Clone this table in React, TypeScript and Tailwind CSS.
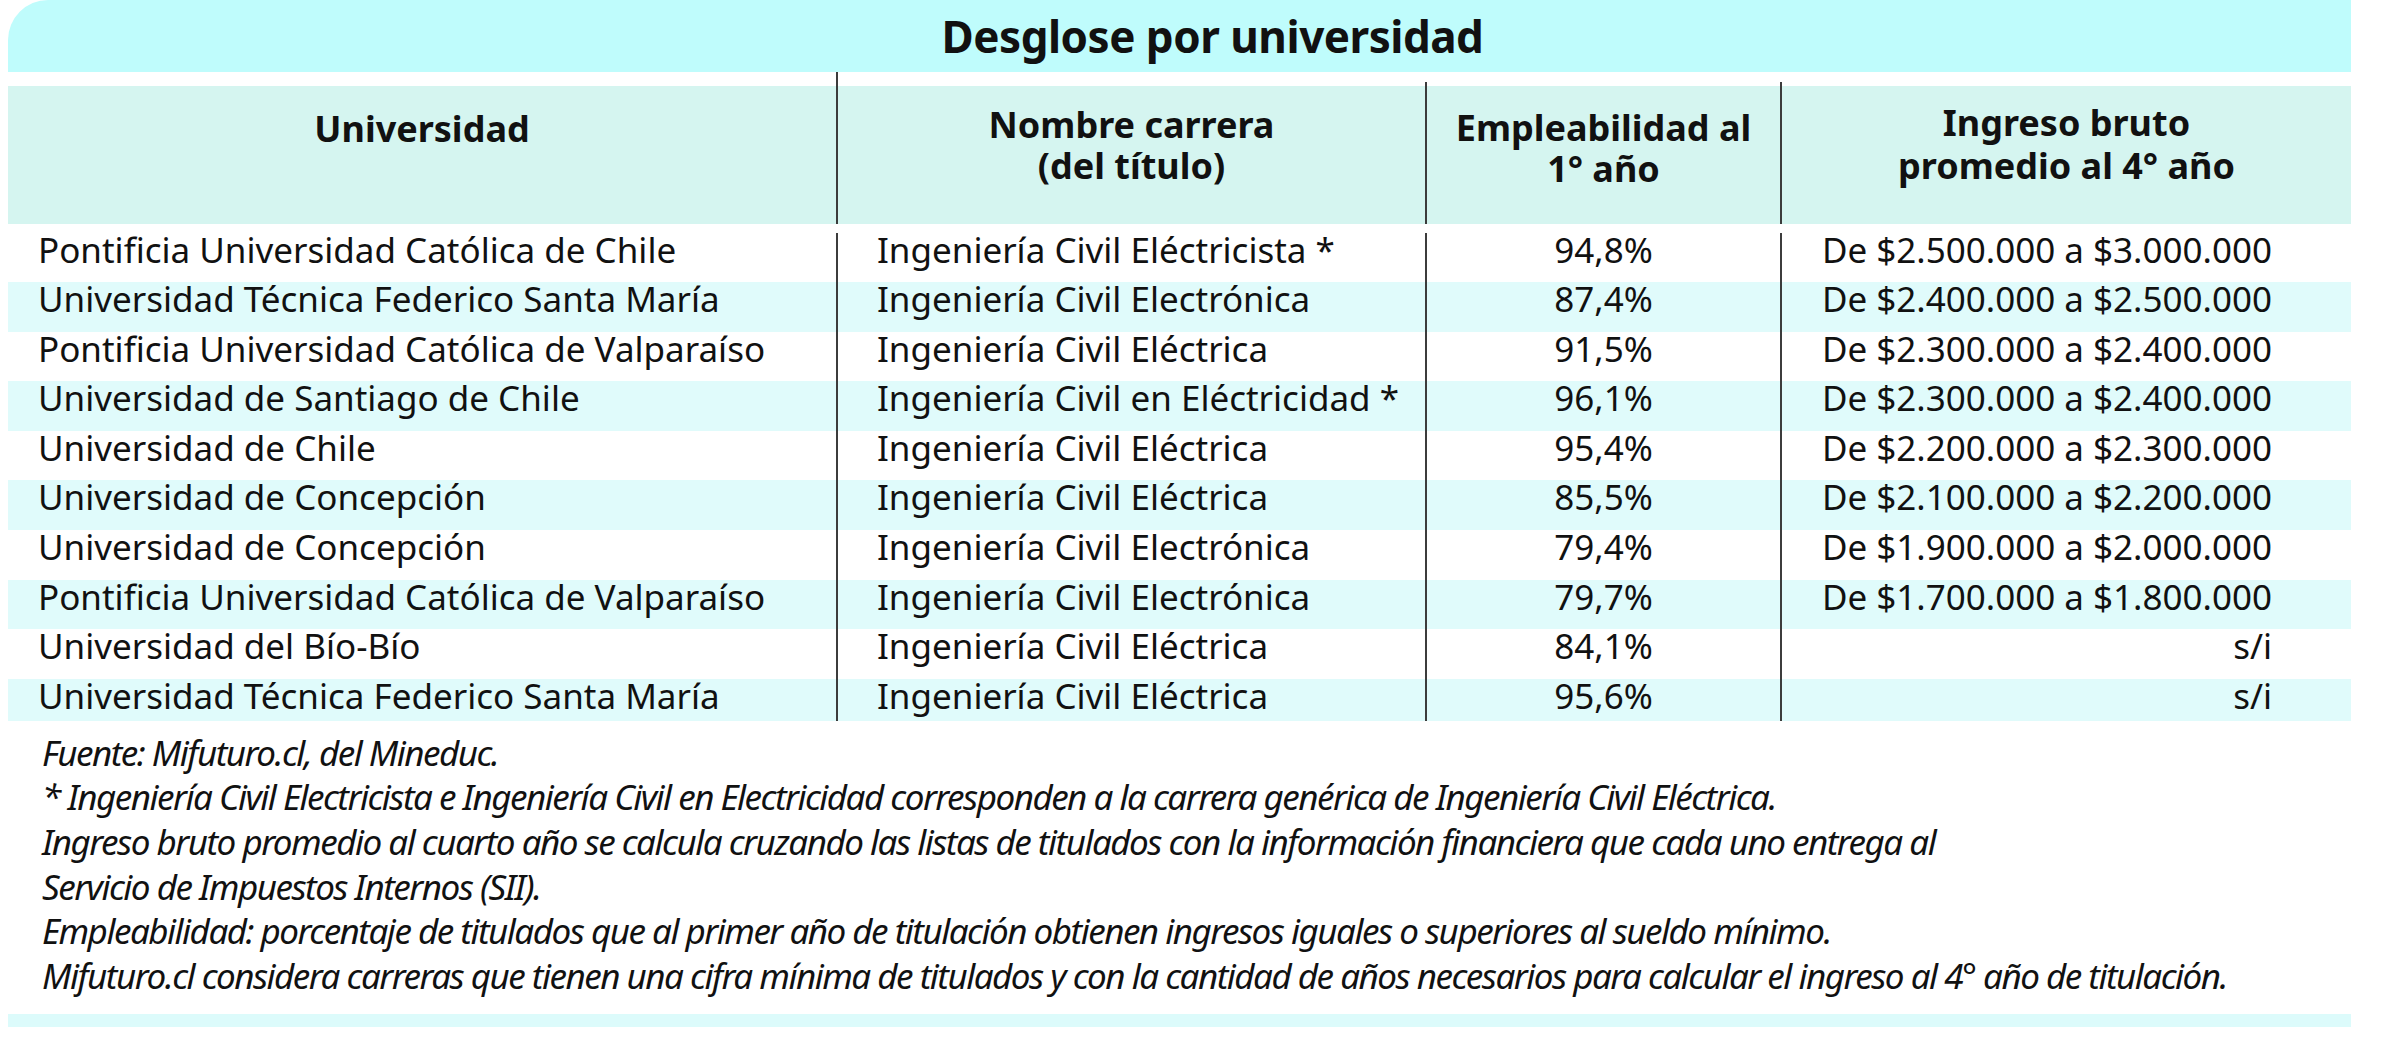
import React from "react";

const rows: [string, string, string, string][] = [
  ["Pontificia Universidad Católica de Chile", "Ingeniería Civil Eléctricista *", "94,8%", "De $2.500.000 a $3.000.000"],
  ["Universidad Técnica Federico Santa María", "Ingeniería Civil Electrónica", "87,4%", "De $2.400.000 a $2.500.000"],
  ["Pontificia Universidad Católica de Valparaíso", "Ingeniería Civil Eléctrica", "91,5%", "De $2.300.000 a $2.400.000"],
  ["Universidad de Santiago de Chile", "Ingeniería Civil en Eléctricidad *", "96,1%", "De $2.300.000 a $2.400.000"],
  ["Universidad de Chile", "Ingeniería Civil Eléctrica", "95,4%", "De $2.200.000 a $2.300.000"],
  ["Universidad de Concepción", "Ingeniería Civil Eléctrica", "85,5%", "De $2.100.000 a $2.200.000"],
  ["Universidad de Concepción", "Ingeniería Civil Electrónica", "79,4%", "De $1.900.000 a $2.000.000"],
  ["Pontificia Universidad Católica de Valparaíso", "Ingeniería Civil Electrónica", "79,7%", "De $1.700.000 a $1.800.000"],
  ["Universidad del Bío-Bío", "Ingeniería Civil Eléctrica", "84,1%", "s/i"],
  ["Universidad Técnica Federico Santa María", "Ingeniería Civil Eléctrica", "95,6%", "s/i"],
];

const notes = [
  "Fuente: Mifuturo.cl, del Mineduc.",
  "* Ingeniería Civil Electricista e Ingeniería Civil en Electricidad corresponden a la carrera genérica de Ingeniería Civil Eléctrica.",
  "Ingreso bruto promedio al cuarto año se calcula cruzando las listas de titulados con la información financiera que cada uno entrega al",
  "Servicio de Impuestos Internos (SII).",
  "Empleabilidad: porcentaje de titulados que al primer año de titulación obtienen ingresos iguales o superiores al sueldo mínimo.",
  "Mifuturo.cl considera carreras que tienen una cifra mínima de titulados y con la cantidad de años necesarios para calcular el ingreso al 4° año de titulación.",
];

const cols = "grid grid-cols-[828px_589px_355px_571px]";
const rule = "border-l-2 border-[#3c3c3c]";

export default function App() {
  return (
    <div className="w-[2391px] h-[1041px] overflow-hidden bg-white pl-[8px] font-['Noto_Sans','Open_Sans',sans-serif] text-[#111]">
      <div className="w-[2343px]">
        {/* Title */}
        <div className="h-[72px] bg-[#bffcfc] rounded-tl-[40px] flex items-center justify-center pl-[66px]">
          <h1 className="text-[44px] font-bold tracking-[-0.5px] leading-none">Desglose por universidad</h1>
        </div>

        {/* gap with column rules */}
        <div className={`${cols} h-[14px]`}>
          <div />
          <div className={rule} />
          <div className={`${rule} mt-[10px]`} />
          <div className={`${rule} mt-[10px]`} />
        </div>

        {/* Header */}
        <div className={`${cols} h-[138px] bg-[#d5f5f0] text-[36px] font-bold leading-[41px] text-center`}>
          <div className="pt-[22px]">Universidad</div>
          <div className={`${rule} pt-[18px]`}>
            Nombre carrera
            <br />
            (del título)
          </div>
          <div className={`${rule} pt-[21px]`}>
            Empleabilidad al
            <br />
            1° año
          </div>
          <div className={`${rule} pt-[15px] leading-[43px]`}>
            Ingreso bruto
            <br />
            promedio al 4° año
          </div>
        </div>

        {/* Body */}
        <div className="text-[35px] leading-[33px]">
          {rows.map((r, i) => (
            <div
              key={i}
              className={`${cols} ${i === 0 ? "h-[58px] pt-[9px]" : i === rows.length - 1 ? "h-[42px]" : "h-[49.6px]"} ${i % 2 === 1 ? "bg-[#e0fbfb]" : "bg-white"}`}
            >
              <div className="pl-[30px] whitespace-nowrap">{r[0]}</div>
              <div className={`${rule} pl-[39px] whitespace-nowrap`}>{r[1]}</div>
              <div className={`${rule} text-center`}>{r[2]}</div>
              <div className={`${rule} text-right pr-[79px] whitespace-nowrap`}>{r[3]}</div>
            </div>
          ))}
        </div>

        {/* Notes */}
        <div className="mt-[10px] pl-[34px] italic text-[35px] leading-[44.6px] tracking-[-1.5px]">
          {notes.map((n, i) => (
            <p key={i} className="whitespace-nowrap">
              {n}
            </p>
          ))}
        </div>

        <div className="mt-[16px] h-[13px] bg-[#dcfbfb]" />
      </div>
    </div>
  );
}
